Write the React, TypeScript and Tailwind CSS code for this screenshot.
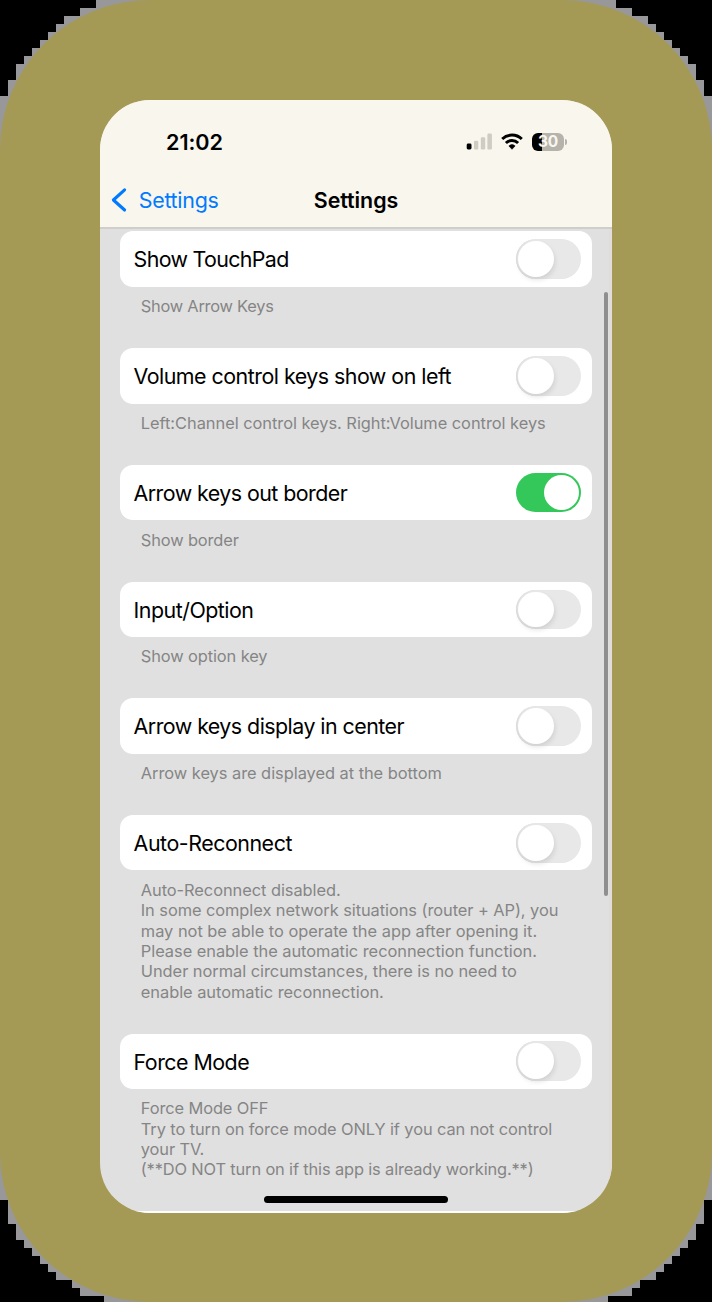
type Setting = {
  label: string;
  tracking: string;
  on?: boolean;
  notes: { text: string; tracking?: string }[];
};

const settings: Setting[] = [
  {
    label: "Show TouchPad",
    tracking: "tracking-[-0.66px]",
    notes: [{ text: "Show Arrow Keys", tracking: "tracking-[-0.24px]" }],
  },
  {
    label: "Volume control keys show on left",
    tracking: "tracking-[-0.51px]",
    notes: [{ text: "Left:Channel control keys. Right:Volume control keys" }],
  },
  {
    label: "Arrow keys out border",
    tracking: "tracking-[-0.55px]",
    on: true,
    notes: [{ text: "Show border", tracking: "tracking-[-0.12px]" }],
  },
  {
    label: "Input/Option",
    tracking: "tracking-[-0.5px]",
    notes: [{ text: "Show option key", tracking: "tracking-[-0.1px]" }],
  },
  {
    label: "Arrow keys display in center",
    tracking: "tracking-[-0.54px]",
    notes: [{ text: "Arrow keys are displayed at the bottom" }],
  },
  {
    label: "Auto-Reconnect",
    tracking: "tracking-[-0.46px]",
    notes: [
      { text: "Auto-Reconnect disabled.", tracking: "tracking-[-0.05px]" },
      { text: "In some complex network situations (router + AP), you", tracking: "tracking-[-0.06px]" },
      { text: "may not be able to operate the app after opening it.", tracking: "tracking-[-0.01px]" },
      { text: "Please enable the automatic reconnection function." },
      { text: "Under normal circumstances, there is no need to" },
      { text: "enable automatic reconnection." },
    ],
  },
  {
    label: "Force Mode",
    tracking: "tracking-[-0.52px]",
    notes: [
      { text: "Force Mode OFF", tracking: "tracking-[-0.1px]" },
      { text: "Try to turn on force mode ONLY if you can not control", tracking: "tracking-[-0.09px]" },
      { text: "your TV.", tracking: "tracking-[-0.1px]" },
      { text: "(**DO NOT turn on if this app is already working.**)", tracking: "tracking-[-0.14px]" },
    ],
  },
];

/* Stepped corner of the outer frame, drawn in 8px cells. */
const TOP_STEPS =
  "M0 0H96V8H80V16H64V24H56V32H48V40H40V48H32V56H24V64H16V80H8V96H0Z";
const BOTTOM_STEPS =
  "M0 102H104V96H80V88H72V80H56V72H48V64H40V56H32V48H24V40H16V24H8V0H0Z";

function Corner({ d, className }: { d: string; className: string }) {
  return (
    <svg className={`absolute ${className}`} width="104" height="102" viewBox="0 0 104 102" shapeRendering="crispEdges">
      <path d={d} fill="#000" />
    </svg>
  );
}

function Toggle({ on }: { on?: boolean }) {
  return (
    <span
      className={`flex h-[39.5px] w-[65px] items-center rounded-full p-[2px] ${
        on ? "justify-end bg-[#34c759]" : "justify-start bg-[#e8e8e8] shadow-[inset_1px_0_1px_#dcdcdc]"
      }`}
    >
      <span
        className={`size-[35.5px] rounded-full bg-white ${on ? "" : "shadow-[1px_3px_5px_rgba(0,0,0,0.1)]"}`}
      />
    </span>
  );
}

function StatusBar() {
  return (
    <div className="flex h-[83px] items-center justify-between pl-[66px] pr-[45px]">
      <span className="pt-[2px] text-[21.6px] font-semibold leading-none tracking-[-0.05px]">21:02</span>
      <span className="flex items-center">
        <svg width="26" height="18" viewBox="0 0 26 18">
          <rect x="0.7" y="10.6" width="4.8" height="5.8" rx="1.4" fill="#000" />
          <rect x="8" y="7.8" width="4.3" height="8.6" rx="1.2" fill="#cfccc3" />
          <rect x="14.8" y="4.3" width="4.4" height="12.1" rx="1.2" fill="#cfccc3" />
          <rect x="21.4" y="0.6" width="4.5" height="15.8" rx="1.2" fill="#cfccc3" />
        </svg>
        <svg className="ml-[9px]" width="22" height="18" viewBox="0 0 22 18">
          <g fill="none" stroke="#000" strokeWidth="3">
            <path d="M1.2 6a14.2 14.2 0 0 1 19.6 0" />
            <path d="M4.9 10a8.8 8.8 0 0 1 12.2 0" />
          </g>
          <path d="M7.9 12.9a4.6 4.6 0 0 1 6.2 0L11 16.3Z" fill="#000" stroke="#000" strokeWidth="0.6" strokeLinejoin="round" />
        </svg>
        <span className="ml-[9px] flex items-center">
          <span className="flex h-[18px] w-[32px] items-center justify-center rounded-[6px] bg-[linear-gradient(90deg,#000_10px,#b5b3ab_10px)] pt-px text-[15.5px] font-bold leading-none tracking-[-0.2px] text-[#f9f6ee]">
            30
          </span>
          <span className="ml-[1px] h-[6px] w-[2px] rounded-r-full bg-[#b5b3ab]" />
        </span>
      </span>
    </div>
  );
}

export default function App() {
  return (
    <div className="relative h-[1302px] w-[712px] overflow-hidden bg-[#989799] font-['Inter',sans-serif] text-black">
      <Corner d={TOP_STEPS} className="left-0 top-0" />
      <Corner d={TOP_STEPS} className="right-0 top-0 -scale-x-100" />
      <Corner d={BOTTOM_STEPS} className="bottom-0 left-0" />
      <Corner d={BOTTOM_STEPS} className="bottom-0 right-0 -scale-x-100" />
      <div className="relative h-full rounded-[150px] bg-[#a59a55] px-[100px] pt-[100px]">
        <main className="relative h-[1113px] overflow-hidden rounded-[50px] bg-[#e0e0e0]">
          <header className="h-[129px] border-b-2 border-[#cfcecb] bg-[#f9f6ee]">
            <StatusBar />
            <div className="grid h-[34px] grid-cols-[1fr_auto_1fr] items-center">
              <span className="flex items-center pl-[11px] text-[#007aff]">
                <svg width="17" height="26" viewBox="0 0 17 26">
                  <path
                    d="M13.6 2.8 2.4 13 13.6 23"
                    fill="none"
                    stroke="currentColor"
                    strokeWidth="3.1"
                    strokeLinecap="round"
                    strokeLinejoin="round"
                  />
                </svg>
                <span className="ml-[10.7px] pt-[2px] text-[21.4px] leading-none tracking-[-0.25px]">Settings</span>
              </span>
              <h1 className="pt-[2px] text-[21.4px] font-semibold leading-none tracking-[-0.05px]">Settings</h1>
            </div>
          </header>
          <ul className="px-[20.4px] pt-[2.4px]">
            {settings.map((s) => (
              <li key={s.label}>
                <div className="flex h-[55.4px] items-center justify-between rounded-[13px] bg-white pl-[13.2px] pr-[10.4px]">
                  <span className={`pt-[2px] text-[21.4px] leading-none ${s.tracking}`}>{s.label}</span>
                  <Toggle on={s.on} />
                </div>
                <div className="pb-[31.5px] pl-[20.4px] pt-[9.5px]">
                  {s.notes.map((n) => (
                    <p
                      key={n.text}
                      className={`h-[20.35px] whitespace-nowrap text-[16.4px] leading-[20.35px] text-[#858585] ${n.tracking ?? "tracking-[-0.03px]"}`}
                    >
                      {n.text}
                    </p>
                  ))}
                </div>
              </li>
            ))}
          </ul>
          <div className="absolute right-0 top-[129px] h-[982px] w-[3px] bg-[#e2dddc]" />
          <div className="absolute right-[4px] top-[192px] h-[604px] w-[4px] rounded-full bg-[#8f8f8f]" />
          <div className="absolute left-[164px] top-[1096px] h-[7px] w-[184px] rounded-full bg-black" />
          <div className="absolute bottom-0 left-0 h-[2px] w-full bg-white" />
        </main>
      </div>
    </div>
  );
}
